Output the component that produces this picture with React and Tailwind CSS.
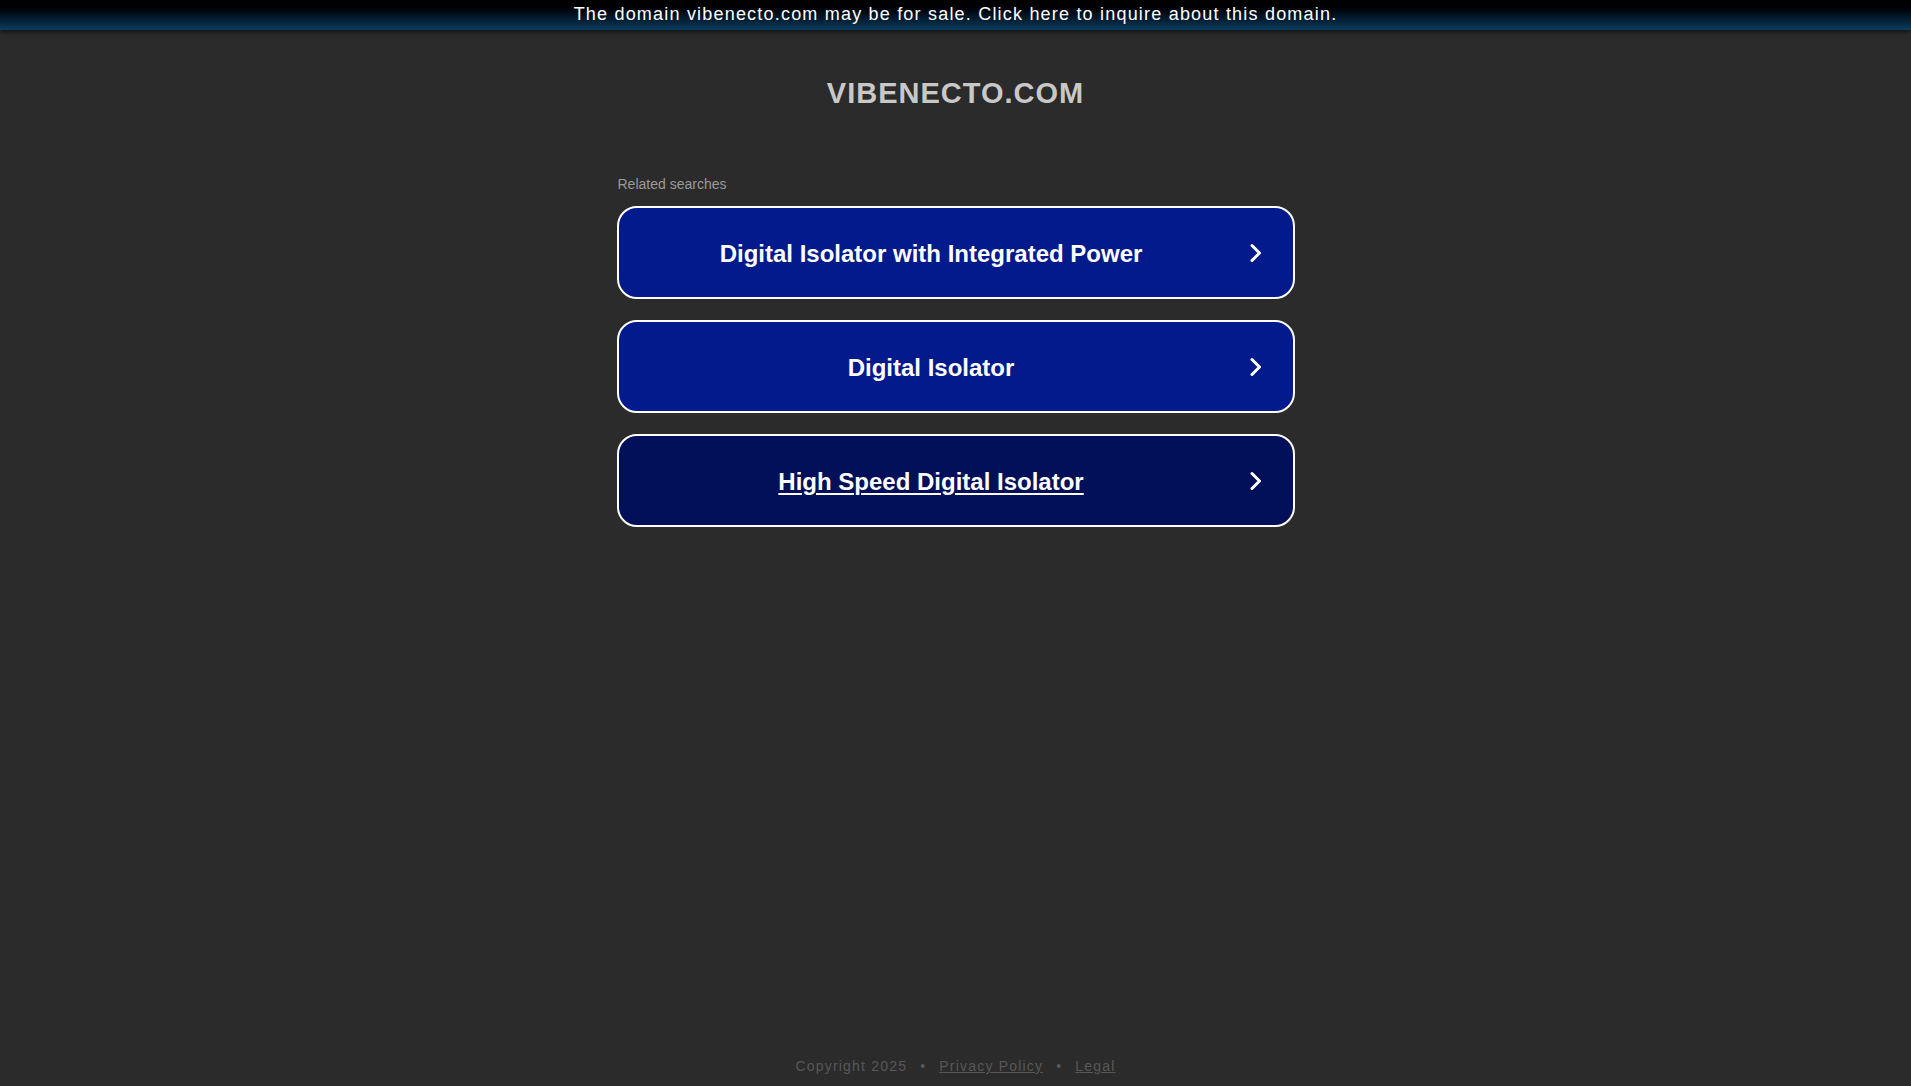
import React from 'react';

const searches = [
	{ label: 'Digital Isolator with Integrated Power', active: false },
	{ label: 'Digital Isolator', active: false },
	{ label: 'High Speed Digital Isolator', active: true },
];

const Chevron = () => (
	<svg width="12" height="20" viewBox="0 0 12 20" className="ml-[6px] mr-[31px] shrink-0">
		<polyline
			points="2,2.5 9.5,10 2,17.5"
			fill="none"
			stroke="#ffffff"
			strokeWidth="3"
			strokeLinecap="round"
			strokeLinejoin="round"
		/>
	</svg>
);

const SearchButton = ({ label, active }) => (
	<a
		href="#"
		className={`flex items-center h-[93px] w-full rounded-[20px] border-2 border-white ${
			active ? 'bg-[#02105a]' : 'bg-[#021a8b]'
		}`}
	>
		<span
			className={`flex-1 text-center text-[24px] font-bold text-white pt-[2px] ${
				active ? 'underline underline-offset-[3px] decoration-2' : ''
			}`}
		>
			{label}
		</span>
		<Chevron />
	</a>
);

export default function App() {
	return (
		<div
			className="min-h-screen flex flex-col bg-[#2b2b2b]"
			style={{ fontFamily: '"Liberation Sans", Arial, sans-serif' }}
		>
			{/* sale banner */}
			<div className="h-[30px] pb-[2px] flex items-center justify-center bg-gradient-to-b from-[#000000] to-[#0c3d60] shadow-[0_2px_4px_rgba(0,0,0,0.6)]">
				<span className="text-[18px] tracking-[1.2px] text-white">
					The domain vibenecto.com may be for sale. Click here to inquire about this domain.
				</span>
			</div>

			<h1 className="mt-[46px] text-center text-[29px] leading-[34px] font-bold tracking-[1px] text-[#c8c8c8]">
				VIBENECTO.COM
			</h1>

			<div className="mx-auto w-[678px] mt-[66px]">
				<div className="text-[14px] leading-[16px] text-[#9a9a9a] pl-[1px]">Related searches</div>
				<div className="mt-[14px] flex flex-col gap-[21px]">
					{searches.map((s) => (
						<SearchButton key={s.label} {...s} />
					))}
				</div>
			</div>

			<div className="mt-auto pb-[9px] flex items-center justify-center text-[14px] tracking-[1.2px] text-[#585858]">
				<span>Copyright 2025</span>
				<span className="mx-[13px]">•</span>
				<a href="#" className="underline">Privacy Policy</a>
				<span className="mx-[13px]">•</span>
				<a href="#" className="underline">Legal</a>
			</div>
		</div>
	);
}
